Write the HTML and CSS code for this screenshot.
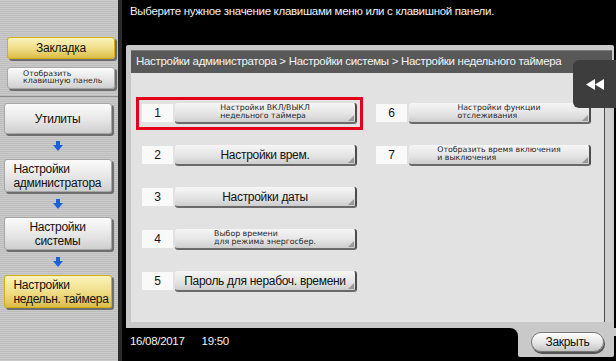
FILE: index.html
```html
<!DOCTYPE html>
<html lang="ru">
<head>
    <meta charset="UTF-8">
    <title>Настройки недельного таймера</title>
    <link rel="stylesheet" href="styles.css">
</head>
<body>
    <aside class="sidebar">
        <div class="side-top">
            <button class="side-btn yellow tab-btn">Закладка</button>
            <button class="side-btn small-btn"><span>Отобразить<br>клавишную панель</span></button>
        </div>
        <nav class="side-path">
            <button class="side-btn path-btn">Утилиты</button>
            <svg class="down" width="10" height="10" viewBox="0 0 10 10"><rect x="3" y="0" width="4" height="5" fill="#1d5fd6"/><polygon points="0,4 10,4 5,10" fill="#1d5fd6"/></svg>
            <button class="side-btn path-btn tall left">Настройки<br>администратора</button>
            <svg class="down" width="10" height="10" viewBox="0 0 10 10"><rect x="3" y="0" width="4" height="5" fill="#1d5fd6"/><polygon points="0,4 10,4 5,10" fill="#1d5fd6"/></svg>
            <button class="side-btn path-btn tall">Настройки<br>системы</button>
            <svg class="down" width="10" height="10" viewBox="0 0 10 10"><rect x="3" y="0" width="4" height="5" fill="#1d5fd6"/><polygon points="0,4 10,4 5,10" fill="#1d5fd6"/></svg>
            <button class="side-btn path-btn tall yellow left">Настройки<br>недельн. таймера</button>
        </nav>
    </aside>

    <main class="screen">
        <p class="hint">Выберите нужное значение клавишами меню или с клавишной панели.</p>

        <section class="frame">
            <div class="crumbs">Настройки администратора &gt; Настройки системы &gt; Настройки недельного таймера</div>
            <div class="panel">
                <div class="col">
                    <div class="row selected">
                        <span class="num">1</span>
                        <button class="opt tiny"><span>Настройки ВКЛ/ВЫКЛ<br>недельного таймера</span></button>
                    </div>
                    <div class="row">
                        <span class="num">2</span>
                        <button class="opt">Настройки врем.</button>
                    </div>
                    <div class="row">
                        <span class="num">3</span>
                        <button class="opt">Настройки даты</button>
                    </div>
                    <div class="row">
                        <span class="num">4</span>
                        <button class="opt tiny"><span>Выбор времени<br>для режима энергосбер.</span></button>
                    </div>
                    <div class="row">
                        <span class="num">5</span>
                        <button class="opt">Пароль для нерабоч. времени</button>
                    </div>
                </div>
                <div class="col">
                    <div class="row">
                        <span class="num">6</span>
                        <button class="opt tiny"><span>Настройки функции<br>отслеживания</span></button>
                    </div>
                    <div class="row">
                        <span class="num">7</span>
                        <button class="opt tiny"><span>Отобразить время включения<br>и выключения</span></button>
                    </div>
                </div>
            </div>
            <button class="back">
                <svg width="18" height="11" viewBox="0 0 18 11"><polygon points="0,5.5 9,0 9,11" fill="#fff"/><polygon points="9,5.5 18,0 18,11" fill="#fff"/></svg>
            </button>
        </section>

        <footer class="status">
            <div class="clock">
                <span>16/08/2017</span>
                <span>19:50</span>
            </div>
            <div class="close-tab">
                <button class="close">Закрыть</button>
            </div>
        </footer>
    </main>
</body>
</html>
```

FILE: styles.css
```css
* {
    box-sizing: border-box;
}
body {
    margin: 0;
    width: 616px;
    height: 361px;
    overflow: hidden;
    display: flex;
    background: #000;
    font-family: "Liberation Sans", Arial, sans-serif;
    font-size: 11.5px;
    letter-spacing: -0.3px;
    color: #111;
}
button {
    font-family: inherit;
    letter-spacing: inherit;
    color: #111;
    cursor: pointer;
}

/* left column */
.sidebar {
    width: 122px;
    height: 361px;
    border-right: 4px solid #2b2b2b;
    background: repeating-linear-gradient(#cacaca 0 1px, #bebebe 1px 2px);
}
.side-top {
    display: flex;
    flex-direction: column;
    gap: 8px;
    height: 97px;
    padding: 37px 0 0 7px;
    border-bottom: 1px solid #8c8c8c;
}
.side-path {
    display: flex;
    flex-direction: column;
    align-items: center;
    padding: 6px 3px 0 0;
}
.side-btn {
    width: 108px;
    padding: 0;
    border: 1px solid #a6a6a6;
    border-radius: 3px;
    background: linear-gradient(#fbfbfb, #e6e6e6 55%, #cfcfcf);
    box-shadow: 2px 2px 0 #6e6e6e;
    font-size: 12px;
    line-height: 14px;
    white-space: nowrap;
}
.side-btn.yellow {
    border-color: #d2ad14;
    background: linear-gradient(#fbf3bd, #efdc84 55%, #dcbd48);
}
.tab-btn {
    height: 22px;
}
.small-btn {
    height: 22px;
    text-align: left;
    padding-left: 15px;
}
.small-btn span,
.opt.tiny span {
    display: inline-block;
    text-align: left;
    font-family: "DejaVu Sans", sans-serif;
    font-size: 7.8px;
    line-height: 7.5px;
    letter-spacing: 0;
    color: #262626;
}
.path-btn {
    height: 31px;
}
.path-btn.tall {
    height: 33px;
}
.path-btn.left {
    text-align: left;
    padding-left: 9px;
}
.down {
    margin: 7px 0 8px;
}

/* main screen */
.screen {
    flex: 1;
    display: flex;
    flex-direction: column;
}
.hint {
    height: 45px;
    margin: 0;
    padding: 5px 8px;
    color: #f2f2f2;
}
.frame {
    position: relative;
    height: 283px;
    margin: 0 2px 0 4px;
    padding: 5px 2px 6px 5px;
    display: flex;
    flex-direction: column;
    background: #c9c9c9;
    border-radius: 2px 2px 0 0;
}
.crumbs {
    height: 23px;
    padding: 4px 5px 0;
    background: #585858;
    border-top: 1px solid #7a7a7a;
    color: #f4f4f4;
    white-space: nowrap;
}
.panel {
    flex: 1;
    display: flex;
    gap: 19px;
    padding: 30px 0 0 11px;
    background: #e2e2e2;
    box-shadow: inset -7px 0 0 #cfcfcf, inset -8px 0 0 #4a4a4a;
}
.col {
    width: 215px;
    display: flex;
    flex-direction: column;
    gap: 21px;
}
.row {
    display: flex;
    height: 21px;
}
.row.selected {
    outline: 3px solid #e3001b;
    outline-offset: 3px;
}
.num {
    width: 31px;
    height: 18px;
    margin-top: 1px;
    background: #f9f9f9;
    text-align: center;
    font-size: 12px;
    line-height: 18px;
}
.opt {
    position: relative;
    flex: 1;
    margin-left: 2px;
    padding: 0;
    border: none;
    border-right: 2px solid #4c4c4c;
    border-bottom: 2px solid #6a6a6a;
    border-radius: 3px;
    background: linear-gradient(#f6f6f6, #e3e3e3 60%, #cdcdcd);
    font-size: 12px;
}
.opt::after {
    content: "";
    position: absolute;
    right: 1px;
    bottom: 1px;
    border-left: 6px solid transparent;
    border-bottom: 6px solid #9a9a9a;
}
.back {
    position: absolute;
    top: 15px;
    right: -2px;
    width: 43px;
    height: 48px;
    padding: 0;
    border: none;
    border-radius: 6px 0 0 6px;
    background: #3d3d3d;
    display: flex;
    align-items: center;
    justify-content: center;
}

/* bottom bar */
.status {
    flex: 1;
    display: flex;
    background: linear-gradient(#c9c9c9 0 8px, #000 8px);
}
.clock {
    flex: 1;
    display: flex;
    gap: 17px;
    padding: 7px 0 0 8px;
    background: #000;
    border-top-right-radius: 8px;
    color: #f2f2f2;
}
.close-tab {
    width: 96px;
    height: 29px;
    margin-right: 2px;
    padding: 4px 0 0 13px;
    background: #c9c9c9;
    border-radius: 0 0 2px 2px;
}
.close {
    width: 73px;
    height: 20px;
    padding: 0;
    border: 1px solid #777;
    border-radius: 10px;
    background: linear-gradient(#fdfdfd, #e6e6e6 55%, #c4c4c4);
    box-shadow: 1px 2px 0 #555;
    font-size: 12px;
}
```
